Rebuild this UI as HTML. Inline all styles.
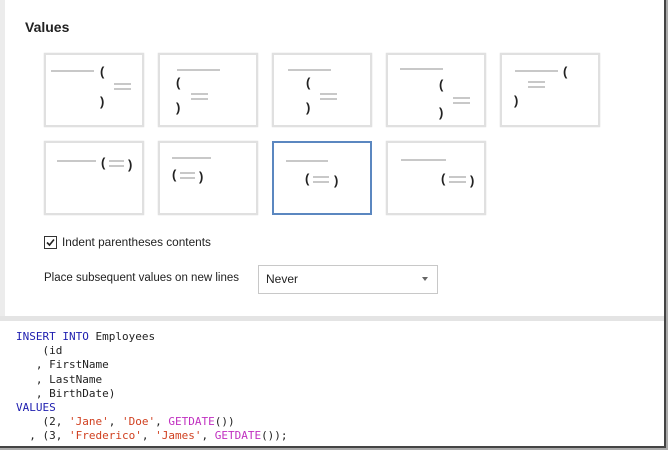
<!DOCTYPE html>
<html><head><meta charset="utf-8"><style>
body{margin:0;width:668px;height:450px;position:relative;background:#fff;font-family:"Liberation Sans",sans-serif;overflow:hidden}
.a{position:absolute}
.card{position:absolute;width:96px;height:70px;border:2px solid #e0e0e0;background:#fff;box-shadow:0 0 1px #ccc}
.sel{border:2px solid #5b87c0;box-shadow:none}
.l{position:absolute;height:2px;background:#c8c8c8}
.e{position:absolute;width:17px;height:8px;border-top:2px solid #c8c8c8;border-bottom:2px solid #c8c8c8;box-sizing:border-box;height:7px}
.p{position:absolute;font:bold 13px "Liberation Sans",sans-serif;color:#222;line-height:12px}
.code{position:absolute;left:16px;top:330px;font:11px/14.2px "DejaVu Sans Mono",monospace;color:#222;white-space:pre;margin:0}
.k{color:#2020b0}.s{color:#d04020}.f{color:#c030c0}
</style></head><body>
<div class="a" style="left:0;top:0;width:5px;height:316px;background:#ececec"></div>
<div class="a" style="left:0;top:316px;width:664px;height:5px;background:#e4e4e4"></div>
<div class="a" style="left:664px;top:0;width:2px;height:448px;background:#444"></div>
<div class="a" style="left:666px;top:0;width:2px;height:450px;background:#aaa"></div>
<div class="a" style="left:0;top:446px;width:666px;height:2px;background:#444"></div>
<div class="a" style="left:0;top:448px;width:668px;height:2px;background:#aaa"></div>

<div class="a" style="left:25px;top:19px;font-weight:bold;font-size:14px;color:#222">Values</div>

<!-- row 1 -->
<div class="card" style="left:44px;top:53px"></div>
<div class="l" style="left:51px;top:70px;width:43px"></div>
<div class="p" style="left:100px;top:66px">(</div>
<div class="e" style="left:114px;top:83px"></div>
<div class="p" style="left:100px;top:96px">)</div>

<div class="card" style="left:158px;top:53px"></div>
<div class="l" style="left:177px;top:69px;width:43px"></div>
<div class="p" style="left:176px;top:77px">(</div>
<div class="e" style="left:191px;top:93px"></div>
<div class="p" style="left:176px;top:102px">)</div>

<div class="card" style="left:272px;top:53px"></div>
<div class="l" style="left:288px;top:69px;width:43px"></div>
<div class="p" style="left:306px;top:77px">(</div>
<div class="e" style="left:320px;top:93px"></div>
<div class="p" style="left:306px;top:102px">)</div>

<div class="card" style="left:386px;top:53px"></div>
<div class="l" style="left:400px;top:68px;width:43px"></div>
<div class="p" style="left:439px;top:79px">(</div>
<div class="e" style="left:453px;top:97px"></div>
<div class="p" style="left:439px;top:107px">)</div>

<div class="card" style="left:500px;top:53px"></div>
<div class="l" style="left:515px;top:70px;width:43px"></div>
<div class="p" style="left:563px;top:66px">(</div>
<div class="e" style="left:528px;top:81px"></div>
<div class="p" style="left:514px;top:95px">)</div>

<!-- row 2 -->
<div class="card" style="left:44px;top:141px"></div>
<div class="l" style="left:57px;top:160px;width:39px"></div>
<div class="p" style="left:101px;top:157px">(</div>
<div class="e" style="left:109px;top:160px;width:15px"></div>
<div class="p" style="left:128px;top:159px">)</div>

<div class="card" style="left:158px;top:141px"></div>
<div class="l" style="left:172px;top:157px;width:39px"></div>
<div class="p" style="left:172px;top:169px">(</div>
<div class="e" style="left:180px;top:172px;width:15px"></div>
<div class="p" style="left:199px;top:171px">)</div>

<div class="card sel" style="left:272px;top:141px"></div>
<div class="l" style="left:286px;top:160px;width:42px"></div>
<div class="p" style="left:305px;top:173px">(</div>
<div class="e" style="left:313px;top:176px;width:16px"></div>
<div class="p" style="left:334px;top:175px">)</div>

<div class="card" style="left:386px;top:141px"></div>
<div class="l" style="left:401px;top:159px;width:45px"></div>
<div class="p" style="left:441px;top:173px">(</div>
<div class="e" style="left:449px;top:176px;width:17px"></div>
<div class="p" style="left:470px;top:175px">)</div>

<!-- checkbox -->
<div class="a" style="left:44px;top:236px;width:11px;height:11px;border:1px solid #333;background:#fff"></div>
<svg class="a" style="left:45px;top:237px" width="11" height="11"><path d="M2 5.5 L4.5 8 L9 2.5" stroke="#222" stroke-width="1.6" fill="none"/></svg>
<div class="a" style="left:62px;top:235px;font-size:11.8px;color:#222">Indent parentheses contents</div>

<div class="a" style="left:44px;top:272px;font-size:11.5px;color:#222">Place subsequent values on new lines</div>
<div class="a" style="left:258px;top:265px;width:178px;height:27px;border:1px solid #c8c8c8;background:#fff"></div>
<div class="a" style="left:266px;top:272px;font-size:12px;color:#222">Never</div>
<div class="a" style="left:422px;top:277px;width:0;height:0;border-left:3.5px solid transparent;border-right:3.5px solid transparent;border-top:4px solid #666"></div>

<pre class="code"><span class="k">INSERT INTO</span> Employees
    (id
   , FirstName
   , LastName
   , BirthDate)
<span class="k">VALUES</span>
    (2, <span class="s">'Jane'</span>, <span class="s">'Doe'</span>, <span class="f">GETDATE</span>())
  , (3, <span class="s">'Frederico'</span>, <span class="s">'James'</span>, <span class="f">GETDATE</span>());</pre>
</body></html>
